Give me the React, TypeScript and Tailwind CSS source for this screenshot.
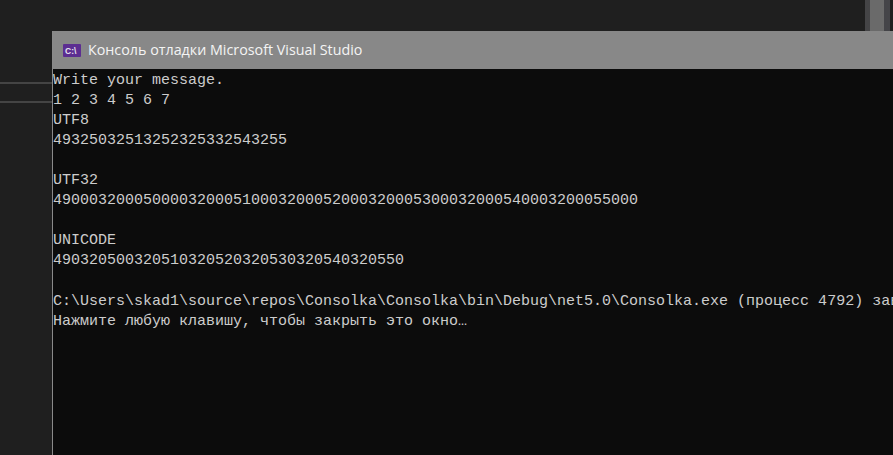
const lines = [
  "Write your message.",
  "1 2 3 4 5 6 7",
  "UTF8",
  "49325032513252325332543255",
  "",
  "UTF32",
  "49000320005000032000510003200052000320005300032000540003200055000",
  "",
  "UNICODE",
  "490320500320510320520320530320540320550",
  "",
  "C:\\Users\\skad1\\source\\repos\\Consolka\\Consolka\\bin\\Debug\\net5.0\\Consolka.exe (процесс 4792) завершил работу с кодом 0.",
  "Нажмите любую клавишу, чтобы закрыть это окно…",
];

export default function App() {
  return (
    <div className="relative h-[455px] w-[893px] overflow-hidden bg-[#1f1f1f] pl-[52px] pt-[31px]">
      <div className="absolute left-0 top-[82px] h-[2px] w-[52px] bg-[#444444]" />
      <div className="absolute left-0 top-[101px] h-[2px] w-[52px] bg-[#444444]" />
      <div className="absolute left-[865px] top-0 flex h-[31px] w-[25px]">
        <div className="w-[5px] bg-[#444446]" />
        <div className="w-[14px] bg-[#6a6a6a]" />
        <div className="w-[6px] bg-[#444448]" />
      </div>
      <div className="flex h-[424px] w-[841px] flex-col border-l border-[#8a8a8a] bg-[#0c0c0c]">
        <div className="flex h-[38px] shrink-0 items-center gap-[7px] bg-[#888888] pl-[10px]">
          <svg width="18" height="13" viewBox="0 0 18 13" aria-hidden="true">
            <rect width="18" height="13" rx="1" fill="#5c2d91" />
            <text x="2" y="9.5" fontSize="8.5" fontWeight="700" fill="#e8e4f0" fontFamily="'Liberation Sans', sans-serif">C:\</text>
          </svg>
          <span className="whitespace-nowrap font-['Open_Sans',sans-serif] text-[14.3px] text-[#f4f4f4]">
            Консоль отладки Microsoft Visual Studio
          </span>
        </div>
        <div className="overflow-hidden whitespace-pre pt-[1.5px] font-['Liberation_Mono',monospace] text-[15px] leading-[20.1px] text-[#cccccc]">
          {lines.map((line, i) => (
            <div key={i} className="h-[20.1px]">{line}</div>
          ))}
        </div>
      </div>
    </div>
  );
}
